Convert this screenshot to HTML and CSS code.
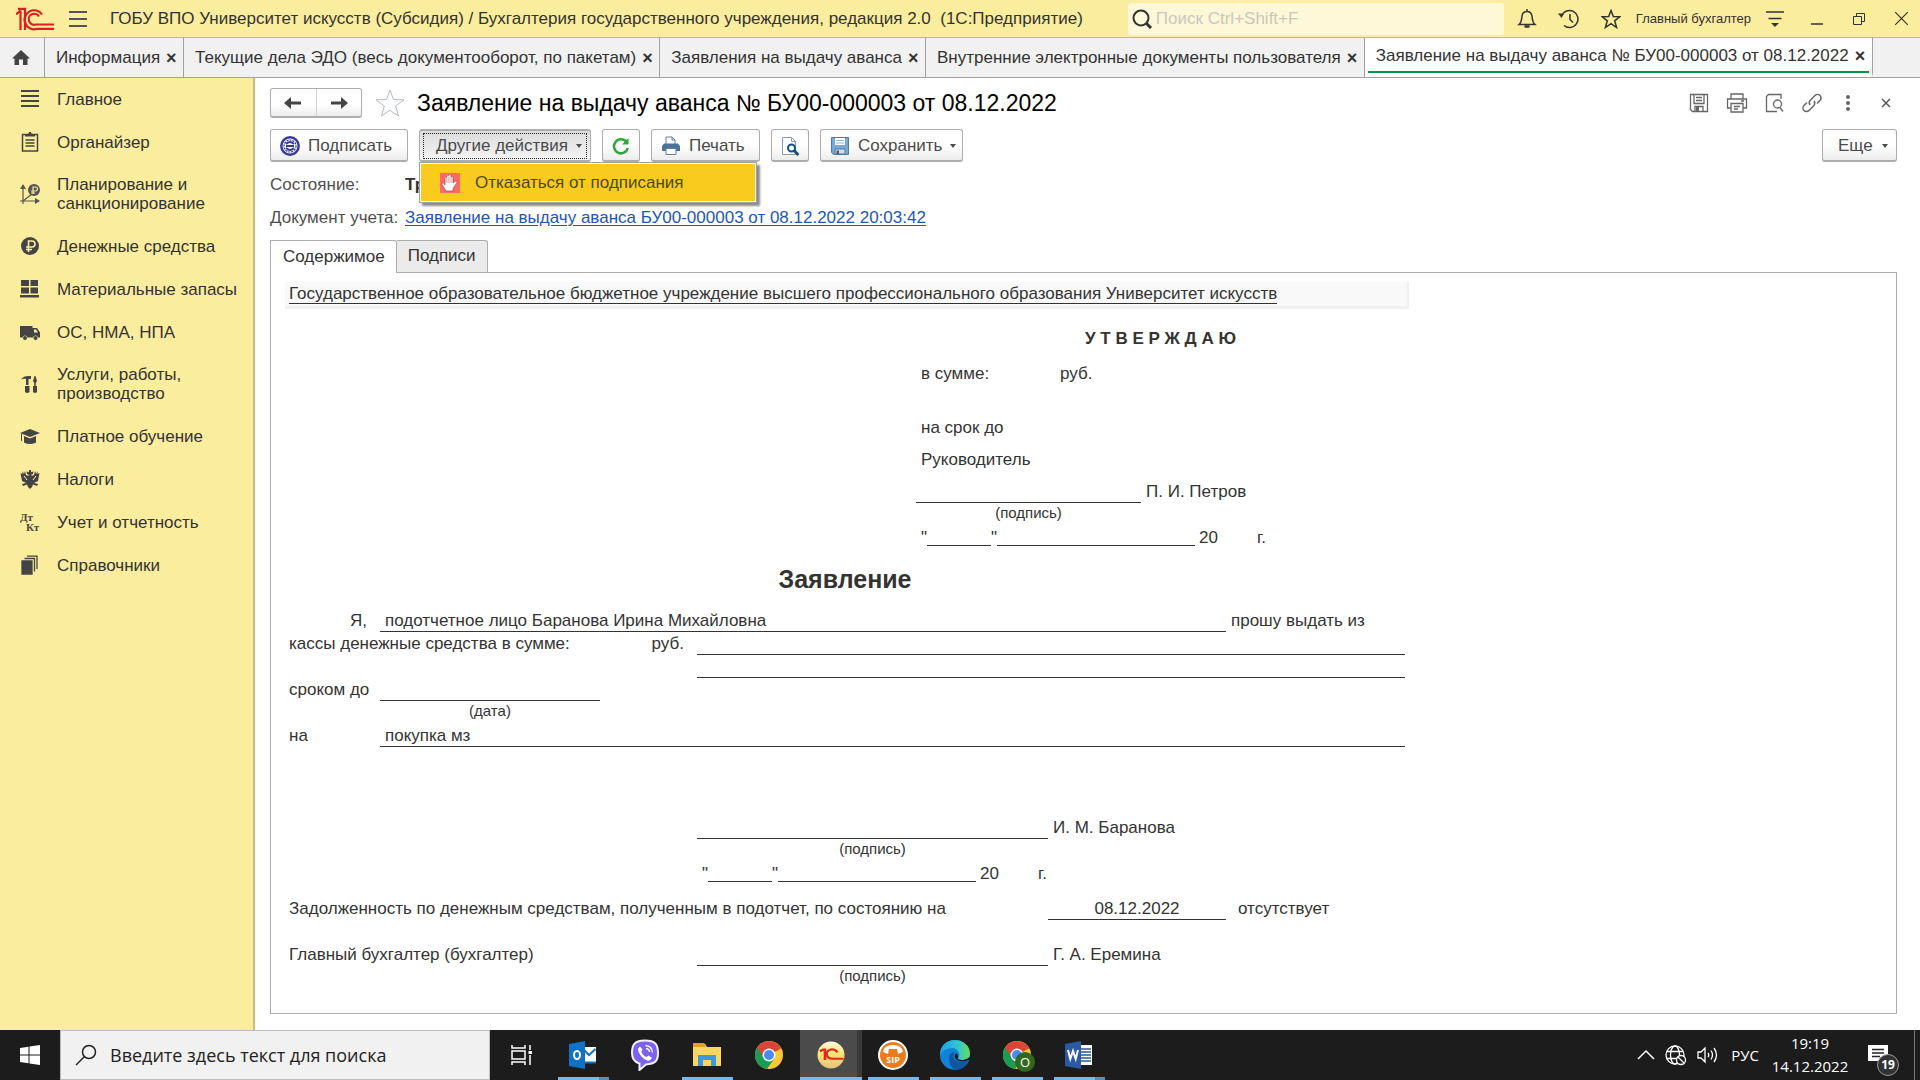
FILE: index.html
```html
<!DOCTYPE html>
<html lang="ru">

<head>
    <meta charset="utf-8">
    <title>Заявление на выдачу аванса № БУ00-000003 от 08.12.2022</title>

    <link rel="stylesheet" href="styles.css">
</head>

<body>

    <!-- Shared icons -->
    <svg class="defs" aria-hidden="true">
        <symbol id="logo-1c" viewBox="0 0 38 24">
            <g fill="none" stroke="currentColor" stroke-width="2.2">
                <path d="M0 7.500L4.500 3.500M4.500 3.500V23M2 1.800H9V23" />
                <path d="M26 7.500A9.500 9.500 0 1 0 21 21.800H38" />
                <path d="M23 9.500A5.500 5.500 0 1 0 20 17.500H38" />
            </g>
        </symbol>
        <symbol id="chrome" viewBox="0 0 28 28">
            <circle cx="14" cy="14" r="14" fill="#fcc934" />
            <path d="M14 14L1.900 7A14 14 0 0 1 26.100 7Z" fill="#dc4437" />
            <path d="M14 14L1.900 7A14 14 0 0 0 12 27.850L19.500 17.500Z" fill="#1a9c57" />
            <path d="M8.500 16.500L1.900 7 14 7H26.500L14 14Z" fill="#dc4437" />
            <path d="M1.900 7A14 14 0 0 0 12 27.850L18 18 10 18Z" fill="#1a9c57" />
            <circle cx="14" cy="14" r="6.500" fill="#fff" />
            <circle cx="14" cy="14" r="5" fill="#4a8af4" />
        </symbol>
    </svg>

    <header class="topbar">
        <svg class="logo" width="38" height="24">
            <use href="#logo-1c" />
        </svg>
        <button class="icon-button burger" aria-label="Меню">
            <svg width="18" height="16" stroke="#555" stroke-width="2">
                <path d="M0 1H18M0 8H18M0 15H18" />
            </svg>
        </button>
        <div class="app-title">ГОБУ ВПО Университет искусств (Субсидия) / Бухгалтерия государственного учреждения, редакция 2.0&nbsp; (1С:Предприятие)</div>
        <label class="search">
            <svg width="22" height="20" fill="none" stroke="#333">
                <circle cx="9" cy="9" r="7.500" stroke-width="2" />
                <path d="M14 14L19 19" stroke-width="3" />
            </svg>
            <input type="text" placeholder="Поиск Ctrl+Shift+F" aria-label="Поиск">
        </label>
        <div class="top-actions">
            <button class="icon-button" aria-label="Уведомления">
                <svg width="20" height="20" fill="none" stroke="#333" stroke-width="1.500">
                    <path d="M2 15.500C5 13 4.500 10 5 7 5.500 4 7.500 2.500 10 2.500S14.500 4 15 7C15.500 10 15 13 18 15.500Z M10 0V2.500" />
                    <path d="M7.500 17.500H12.500" stroke-width="2.500" />
                </svg>
            </button>
            <button class="icon-button" aria-label="История">
                <svg width="22" height="20" fill="none" stroke="#333" stroke-width="1.500">
                    <path d="M3.500 7A8.500 8.500 0 1 1 6 16.500M12 5V10.500L15 13.500" />
                    <path d="M0 4.500H6L3.500 9Z" fill="#333" stroke="none" />
                </svg>
            </button>
            <button class="icon-button" aria-label="Избранное">
                <svg width="20" height="20" fill="none" stroke="#333" stroke-width="1.500">
                    <path d="M10 1.500L12.300 7.500 19 7.700 13.700 11.800 15.600 18.500 10 14.700 4.400 18.500 6.300 11.800 1 7.700 7.700 7.500Z" />
                </svg>
            </button>
            <span class="user">Главный бухгалтер</span>
            <button class="icon-button" aria-label="Настройки">
                <svg width="18" height="18" stroke="#333" stroke-width="1.500">
                    <path d="M0 2H18M2.500 8.500H15.500" />
                    <path d="M5 13H13L9 17Z" fill="#333" stroke="none" />
                </svg>
            </button>
        </div>
        <div class="window-buttons">
            <button class="icon-button" aria-label="Свернуть">
                <svg width="12" height="12" stroke="#333" stroke-width="1.500">
                    <path d="M0 11H12" />
                </svg>
            </button>
            <button class="icon-button" aria-label="Развернуть">
                <svg width="12" height="12" fill="none" stroke="#333">
                    <path d="M.5 3.500H8.500V11.500H.5ZM3.500 3.500V.5H11.500V8.500H8.500" />
                </svg>
            </button>
            <button class="icon-button" aria-label="Закрыть">
                <svg width="13" height="13" stroke="#333" stroke-width="1.200">
                    <path d="M0 0L13 13M13 0L0 13" />
                </svg>
            </button>
        </div>
    </header>

    <nav class="open-tabs">
        <button class="open-tab home" aria-label="Начальная страница">
            <svg width="18" height="16" fill="#444">
                <path d="M9 0L18 8.500H15.500V15H11V9.500H7V15H2.500V8.500H0Z" />
            </svg>
        </button>
        <button class="open-tab">Информация <span class="cross">×</span></button>
        <button class="open-tab">Текущие дела ЭДО (весь документооборот, по пакетам) <span class="cross">×</span></button>
        <button class="open-tab">Заявления на выдачу аванса <span class="cross">×</span></button>
        <button class="open-tab">Внутренние электронные документы пользователя <span class="cross">×</span></button>
        <button class="open-tab active">Заявление на выдачу аванса № БУ00-000003 от 08.12.2022 <span class="cross">×</span></button>
    </nav>

    <div class="workspace">
        <nav class="sections">
            <a href="#">
                <svg viewBox="0 0 20 20" stroke="#444" stroke-width="2">
                    <path d="M1 2H19M1 7H19M1 12H19M1 17H19" />
                </svg>
                Главное
            </a>
            <a href="#">
                <svg viewBox="0 0 20 20" fill="none" stroke="#444" stroke-width="1.500">
                    <path d="M2.500 2.500H17.500V19H2.500ZM5.500 8H14.500M5.500 11H14.500M5.500 14H14.500" />
                    <path d="M5 4.500V3H8L9 0H11L12 3H15V4.500Z" fill="#444" stroke="none" />
                </svg>
                Органайзер
            </a>
            <a href="#">
                <svg viewBox="0 0 20 20" fill="none" stroke="#555" stroke-width="1.200">
                    <path d="M3 20V3M0 17H17M3 17L12 10" />
                    <path d="M0 5L3 0 6 5ZM15 14L20 17 15 20Z" fill="#555" stroke="none" />
                    <circle cx="14" cy="6" r="6" fill="#555" stroke="none" />
                    <path d="M13 10V3H15.500A2 2 0 0 1 15.500 7H11M11 9H15" stroke="#fbed9e" />
                </svg>
                Планирование и санкционирование
            </a>
            <a href="#">
                <svg viewBox="0 0 20 20" fill="none">
                    <circle cx="10" cy="10" r="9" fill="#444" />
                    <path d="M8.500 16V5H12A3 3 0 0 1 12 11H6M6 13.500H12" stroke="#fbed9e" stroke-width="1.600" />
                </svg>
                Денежные средства
            </a>
            <a href="#">
                <svg viewBox="0 0 20 20" fill="#444">
                    <path d="M1 1H9V7H1ZM10.500 1H18V7H10.500ZM1 8.500H9V14.500H1ZM10.500 8.500H18V14.500H10.500ZM0 16H19V18.500H0Z" />
                </svg>
                Материальные запасы
            </a>
            <a href="#">
                <svg viewBox="0 0 20 20" fill="#444">
                    <path fill-rule="evenodd" d="M0 4H12.500V6H17L20 10.500V15.500H18A2.600 2.600 0 0 0 13 15.500H7.500A2.600 2.600 0 0 0 2.500 15.500H0ZM14 7.500V10.500H18L16 7.500Z" />
                    <circle cx="5" cy="16" r="2" />
                    <circle cx="15.500" cy="16" r="2" />
                </svg>
                ОС, НМА, НПА
            </a>
            <a href="#">
                <svg viewBox="0 0 20 20" fill="#444">
                    <path d="M1 5.500C3 2.500 6 1.500 11 2V5H8.500V11H6V5C4 4.500 3 5 1 5.500ZM5 12H9.500V18Q7 20 5 18ZM14.500 2H15.500L17 7 15.800 9V12H17V18Q15 20 13 18V12H14.200V9L13 7Z" />
                </svg>
                Услуги, работы, производство
            </a>
            <a href="#">
                <svg viewBox="0 0 20 20" fill="#444">
                    <path d="M10 3L20 7 10 11 0 7ZM4 10L10 12.500 16 10V16.500Q10 19.500 4 16.500ZM1 8H2V15H1Z" />
                </svg>
                Платное обучение
            </a>
            <a href="#">
                <svg viewBox="0 0 20 20" fill="#444">
                    <path d="M9 3V1H11V3L13.500 2.500 13 5 11.500 5.500V7L14 6 15 2 16 5 17.500 2 17.500 5 19.500 4 18 12 14 14 18 15 17 17 13 15.500 12 18 10 20 8 18 7 15.500 3 17 2 15 6 14 2 12 .5 4 2.500 5 2.500 2 4 5 5 2 6 6 8.500 7V5.500L7 5 6.500 2.500Z" />
                    <path d="M4 7L7 11M16 7L13 11" stroke="#fbed9e" />
                </svg>
                Налоги
            </a>
            <a href="#">
                <svg viewBox="0 0 20 20" fill="#444" class="dtkt">
                    <text x="0" y="9">Дт</text>
                    <text x="6" y="19">Кт</text>
                </svg>
                Учет и отчетность
            </a>
            <a href="#">
                <svg viewBox="0 0 20 20" fill="none" stroke="#444" stroke-width="1.300">
                    <path d="M2 6H12V19H2Z" fill="#444" />
                    <path d="M4.500 3.500H14.500V16.500M7 1.200H17V14" />
                </svg>
                Справочники
            </a>
        </nav>

        <main class="form">
            <div class="form-header">
                <div class="history">
                    <button aria-label="Назад">
                        <svg width="18" height="12" fill="#444">
                            <path d="M7 0V4.500H17V7.500H7V12L0 6Z" />
                        </svg>
                    </button>
                    <button aria-label="Вперед">
                        <svg width="18" height="12" fill="#444">
                            <path d="M11 0V4.500H1V7.500H11V12L18 6Z" />
                        </svg>
                    </button>
                </div>
                <button class="icon-button favorite" aria-label="В избранное">
                    <svg width="30" height="28" fill="none" stroke="#b4bac0">
                        <path d="M15 1L18.500 10.500 29 10.800 20.700 17 23.500 27 15 21.300 6.500 27 9.300 17 1 10.800 11.500 10.500Z" />
                    </svg>
                </button>
                <h1>Заявление на выдачу аванса № БУ00-000003 от 08.12.2022</h1>
                <div class="form-tools">
                    <button class="icon-button" aria-label="Сохранить">
                        <svg width="20" height="20" fill="none" stroke="#666" stroke-width="1.300">
                            <path d="M1.500 1.500H18.500V18.500H3.500L1.500 16.500ZM5 1.500V10.500H15V1.500M7 4.500H13M7 7.500H13M6 18.500V13.500H14V18.500" />
                            <path d="M7 14H10V18H7Z" fill="#666" stroke="none" />
                        </svg>
                    </button>
                    <button class="icon-button" aria-label="Печать">
                        <svg width="22" height="20" fill="none" stroke="#666" stroke-width="1.300">
                            <path d="M5 6V1H17V6M5 15H1.500V6H20.500V15H17M5 10.500H17V19H5ZM8 13.500H14M8 16H12M15 8H18" />
                        </svg>
                    </button>
                    <button class="icon-button" aria-label="Просмотр">
                        <svg width="20" height="20" fill="none" stroke="#666" stroke-width="1.300">
                            <path d="M16 6V1.500H3.500L1.500 3.500V18.500H12M15 14.500L18 18.500" />
                            <circle cx="12.500" cy="11" r="4" />
                        </svg>
                    </button>
                    <button class="icon-button" aria-label="Ссылка">
                        <svg width="20" height="20" fill="none" stroke="#666" stroke-width="1.500">
                            <path d="M8 12A4 4 0 0 1 8.500 7L13 2.500A3.500 3.500 0 0 1 18 7.500L15 10.500M12 8A4 4 0 0 1 11.500 13L7 17.500A3.500 3.500 0 0 1 2 12.500L5 9.500" />
                        </svg>
                    </button>
                    <button class="icon-button" aria-label="Еще">
                        <svg width="20" height="20" fill="#666">
                            <circle cx="9" cy="4" r="2" />
                            <circle cx="9" cy="10" r="2" />
                            <circle cx="9" cy="16" r="2" />
                        </svg>
                    </button>
                    <button class="icon-button" aria-label="Закрыть">
                        <svg width="20" height="20" stroke="#555" stroke-width="1.500">
                            <path d="M6 6L14 14M14 6L6 14" />
                        </svg>
                    </button>
                </div>
            </div>

            <div class="commands">
                <button class="command sign">
                    <svg width="20" height="20" fill="none" stroke="#3a3a9c">
                        <circle cx="10" cy="10" r="8.700" stroke-width="2.500" />
                        <circle cx="10" cy="10" r="6" stroke-width="1.200" stroke-dasharray="2 1" />
                        <path d="M6 8Q10 4 14 8M6 12Q10 16 14 12M6 10H14" stroke-width="1.800" />
                    </svg>
                    Подписать
                </button>
                <div class="dropdown">
                    <button class="command pressed"><span class="focus">Другие действия <i class="arrow"></i></span></button>
                    <div class="dropdown-menu">
                        <button class="dropdown-item">
                            <svg width="20" height="20">
                                <path d="M0 0H20V20H0Z" fill="#fb6a66" />
                                <path d="M6 18L2 11.500Q1.500 9.500 3 9.500L5 12V4.500Q5.800 3 6.800 4.500V3Q7.800 1 8.800 2.500V2Q10 .5 11 2V4Q12 2.500 13 4V10L15.500 8Q17.500 8 17 9.500L13 15.500V18Z" fill="#fff" stroke="#a33" stroke-width=".6" />
                                <path d="M6.900 5V10M8.900 4V10M11 4V10" stroke="#c66" stroke-width=".7" />
                            </svg>
                            Отказаться от подписания
                        </button>
                    </div>
                </div>
                <button class="command square" aria-label="Обновить">
                    <svg width="18" height="18" fill="none" stroke="#2fa53a" stroke-width="2.500">
                        <path d="M14.500 5A7 7 0 1 0 15.800 11" />
                        <path d="M16.500 1V7.500H10Z" fill="#2fa53a" stroke="none" />
                    </svg>
                </button>
                <button class="command print">
                    <svg width="20" height="20" fill="none">
                        <path d="M5 9V1H11L14 4V9" fill="#fff" stroke="#5c7f9f" />
                        <path d="M11 1V4H14" stroke="#5c7f9f" />
                        <path d="M3 7.500H17L19 10V15H1V10Z" fill="#4a739c" />
                        <path d="M5 12.500H15V18.500H5Z" fill="#fff" stroke="#5c7f9f" />
                    </svg>
                    Печать
                </button>
                <button class="command square" aria-label="Предварительный просмотр">
                    <svg width="18" height="20" fill="none">
                        <path d="M1.500 1.500H10.500L14.500 5.500V18.500H1.500Z" fill="#fff" stroke="#8a9aa8" />
                        <path d="M10.500 1.500V5.500H14.500" stroke="#8a9aa8" />
                        <circle cx="10.500" cy="12" r="3.500" stroke="#0f5080" stroke-width="2" />
                        <path d="M13 14.500L17.500 19" stroke="#0f5080" stroke-width="3" />
                    </svg>
                </button>
                <button class="command save">
                    <svg width="20" height="20" fill="none">
                        <path d="M1.500 1.500H18.500V18.500H3.500L1.500 16.500Z" fill="#78a8d8" stroke="#4c79a8" />
                        <path d="M5 2H15V9H5Z" fill="#fff" />
                        <path d="M6 4.500H14M6 7H14" stroke="#8fb4d8" />
                        <path d="M5 13H15V18H5Z" fill="#d5dce4" stroke="#4c79a8" />
                        <path d="M6.500 14.500H9V18H6.500Z" fill="#557" />
                    </svg>
                    Сохранить <i class="arrow"></i>
                </button>
                <button class="command more">Еще <i class="arrow"></i></button>
            </div>

            <div class="field">
                <span class="field-name">Состояние:</span>
                <b class="state">Тр</b>
            </div>
            <div class="field">
                <span class="field-name">Документ учета:</span>
                <a href="#">Заявление на выдачу аванса БУ00-000003 от 08.12.2022 20:03:42</a>
            </div>

            <div class="pages">
                <button class="page-tab current">Содержимое</button>
                <button class="page-tab">Подписи</button>
            </div>

            <section class="sheet">
                <div class="org"><span>Государственное образовательное бюджетное учреждение высшего профессионального образования Университет искусств</span></div>

                <div class="row h-41">
                    <b class="approve center">У Т В Е Р Ж Д А Ю</b>
                </div>
                <div class="row h-35">
                    <span class="col-e">в сумме:</span>
                    <span class="col-f indent">руб.</span>
                </div>
                <div class="row h-54">
                    <span class="col-e">на срок до</span>
                </div>
                <div class="row h-32">
                    <span class="col-e">Руководитель</span>
                </div>
                <div class="row h-32">
                    <span class="line approve-sign"></span>
                    <span class="col-g">П. И. Петров</span>
                </div>
                <div class="row note">
                    <span class="approve-sign center">(подпись)</span>
                </div>
                <div class="row date">
                    <span class="approve date-parts"><span>"</span><i class="day"></i><span>"</span><i class="month"></i><span class="year">20</span><span>г.</span></span>
                </div>

                <h2>Заявление</h2>

                <div class="row h-35">
                    <span class="col-a me">Я,</span>
                    <span class="line person">подотчетное лицо Баранова Ирина Михайловна</span>
                    <span class="col-i">прошу выдать из</span>
                </div>
                <div class="row">
                    <span class="col-a">кассы денежные средства в сумме:</span>
                    <span class="col-c right">руб.</span>
                    <span class="line amount"></span>
                </div>
                <div class="row">
                    <span class="line amount"></span>
                </div>
                <div class="row">
                    <span class="col-a">сроком до</span>
                    <span class="line col-b"></span>
                </div>
                <div class="row note">
                    <span class="col-b center">(дата)</span>
                </div>
                <div class="row date">
                    <span class="col-a">на</span>
                    <span class="line purpose">покупка мз</span>
                </div>

                <div class="row h-92">
                    <span class="line sign-place"></span>
                    <span class="col-f">И. М. Баранова</span>
                </div>
                <div class="row note">
                    <span class="sign-place center">(подпись)</span>
                </div>
                <div class="row date">
                    <span class="amount date-parts"><span>"</span><i class="day"></i><span>"</span><i class="month"></i><span class="year">20</span><span>г.</span></span>
                </div>
                <div class="row h-35">
                    <span class="col-a">Задолженность по денежным средствам, полученным в подотчет, по состоянию на</span>
                    <span class="line debt-date center">08.12.2022</span>
                    <span class="col-i indent">отсутствует</span>
                </div>
                <div class="row h-46">
                    <span class="col-a">Главный бухгалтер (бухгалтер)</span>
                    <span class="line sign-place"></span>
                    <span class="col-f">Г. А. Еремина</span>
                </div>
                <div class="row note">
                    <span class="sign-place center">(подпись)</span>
                </div>
            </section>
        </main>
    </div>

    <footer class="taskbar">
        <button class="start" aria-label="Пуск">
            <svg width="20" height="20" fill="#fff">
                <path d="M0 3L8.500 1.800V9.500H0ZM9.500 1.600L20 0V9.500H9.500ZM0 10.500H8.500V18.200L0 17ZM9.500 10.500H20V20L9.500 18.400Z" />
            </svg>
        </button>
        <label class="task-search">
            <svg width="22" height="22" fill="none" stroke="#222" stroke-width="1.500">
                <circle cx="14" cy="8" r="6.500" />
                <path d="M9.500 12.500L1 21" />
            </svg>
            <input type="text" placeholder="Введите здесь текст для поиска" aria-label="Поиск в Windows">
        </label>
        <button class="task" aria-label="Представление задач">
            <svg width="22" height="20" fill="none" stroke="#fff" stroke-width="1.500">
                <path d="M1 0V3H14V0M1 6H14V14H1ZM1 20V17H14V20M19 0V5M19 10V20" />
                <path d="M17.500 6H21V9H17.500Z" fill="#fff" stroke="none" />
            </svg>
        </button>
        <button class="task running grouped" aria-label="Outlook">
            <svg width="28" height="28">
                <path d="M13 6H27V22H13Z" fill="#fff" />
                <path d="M14 8L20 14 26.500 8M13 21.500H27" fill="none" stroke="#1372c4" stroke-width="2" />
                <path d="M0 3L16 0V28L0 25Z" fill="#0f72c6" />
                <ellipse cx="8" cy="14" rx="3" ry="4" fill="none" stroke="#fff" stroke-width="2" />
            </svg>
        </button>
        <button class="task" aria-label="Viber">
            <svg width="30" height="32" fill="none">
                <path d="M15 1.500C25 1.500 28 5 28 14 28 22 25 25 16 25.500L9.500 31V24.500C4 23 2 20 2 14 2 5 5 1.500 15 1.500Z" fill="#7a63ee" stroke="#f4f0ff" stroke-width="2" />
                <path d="M10 7.500L12.500 10.500 11.500 13Q13 17 16.500 18L18.500 16.500 22 19Q20 22.500 17 21.500 10 18.500 8 11 7.500 9 10 7.500Z" fill="#fff" />
                <path d="M15.500 6.500Q22 7 22.500 13.500M16 9.500Q19.500 10 19.500 13" stroke="#fff" stroke-width="1.300" />
            </svg>
        </button>
        <button class="task running" aria-label="Проводник">
            <svg width="28" height="26">
                <path d="M0 2H12L14 5H28V24H0Z" fill="#fdd466" />
                <path d="M0 1H11L13 3 12 5H0Z" fill="#e0a21c" />
                <path d="M5 24V13H23V24H18V18H10V24Z" fill="#3b9ade" />
            </svg>
        </button>
        <button class="task" aria-label="Chrome">
            <svg width="28" height="28">
                <use href="#chrome" />
            </svg>
        </button>
        <button class="task running grouped selected" aria-label="1С:Предприятие">
            <svg width="28" height="28">
                <linearGradient id="gold" x2="0" y2="1">
                    <stop offset="0" stop-color="#fffbe0" />
                    <stop offset=".45" stop-color="#fbe573" />
                    <stop offset="1" stop-color="#e5c27e" />
                </linearGradient>
                <circle cx="14" cy="14" r="13.500" fill="url(#gold)" />
                <g transform="translate(3 7) scale(.62 .55)" fill="none" stroke="#e02a1d" stroke-width="4">
                    <path d="M0 6L5 3H8V22" />
                    <path d="M28 8A9 8.500 0 1 0 20 19.500H38" />
                </g>
            </svg>
        </button>
        <button class="task running" aria-label="SIP">
            <svg width="30" height="30">
                <circle cx="15" cy="15" r="14" fill="#ec7b1e" stroke="#fff" stroke-width="2" />
                <path d="M5 12Q6 5 15 5T25 12L20 14 19 9H11L10 14Z" fill="#fff" />
                <text class="sip" x="15" y="23">SIP</text>
            </svg>
        </button>
        <button class="task running" aria-label="Edge">
            <svg width="30" height="30">
                <linearGradient id="sea">
                    <stop offset="0" stop-color="#1da2e8" />
                    <stop offset=".6" stop-color="#31c5cf" />
                    <stop offset="1" stop-color="#63de56" />
                </linearGradient>
                <circle cx="15" cy="15" r="15" fill="#1183d6" />
                <path d="M0 13C1 5 7 0 15 0S30 6 30 13 24 21 18 19C21 16 19 8 12 8 6 8 1 12 0 15Z" fill="url(#sea)" />
                <path d="M9 18C9 14 12 12 15 12 12 15 13 21 20 22 24 22.500 27 21 28.500 20 26 27 20 30 15 30 11 28 9 23 9 18Z" fill="#0f56a3" />
                <path d="M15 14Q18 12 18 17L17.500 19Q24 22 30 17V21L28.500 20Q22 23 17 20 14 18 15 14Z" fill="#1c1c1c" />
            </svg>
        </button>
        <button class="task running" aria-label="Chrome, профиль O">
            <svg width="28" height="28">
                <use href="#chrome" />
            </svg>
            <span class="profile">O</span>
        </button>
        <button class="task running grouped" aria-label="Word">
            <svg width="28" height="28">
                <path d="M14 4H27V24H14Z" fill="#fff" />
                <path d="M16 8H26M16 11H26M16 14H26M16 17H26M16 20H26" stroke="#2b579a" stroke-width="1.500" />
                <path d="M0 3L16 0V28L0 25Z" fill="#2b5aa5" />
                <path d="M3 9L5.300 18 8 10 10.700 18 13 9" fill="none" stroke="#fff" stroke-width="2" />
            </svg>
        </button>

        <div class="tray">
            <svg width="18" height="10" fill="none" stroke="#fff" stroke-width="1.500">
                <path d="M1 9L9 1 17 9" />
            </svg>
            <svg width="22" height="22" fill="none" stroke="#fff" stroke-width="1.300">
                <circle cx="10" cy="11" r="9" />
                <ellipse cx="10" cy="11" rx="4.500" ry="9" />
                <path d="M2 7.500H18M2 14.500H13" />
                <circle cx="16" cy="16" r="4.500" fill="#1c1c1c" />
                <path d="M13 13L19 19" />
            </svg>
            <svg width="22" height="18" fill="none" stroke="#fff" stroke-width="1.300">
                <path d="M1 6H4L8 2V16L4 12H1ZM11 7Q12.500 9 11 11M14 4.500Q17 9 14 13.500M17 2Q22 9 17 16" />
            </svg>
            <span class="lang">РУС</span>
            <time class="clock">19:19<br>14.12.2022</time>
            <div class="notices">
                <svg width="20" height="20">
                    <path d="M0 0H20V16H14L10 20V16H0Z" fill="#fff" />
                    <path d="M4 4.500H16M4 8H16M4 11.500H12" stroke="#222" stroke-width="1.300" />
                </svg>
                <span class="badge">19</span>
            </div>
            <div class="show-desktop"></div>
        </div>
    </footer>

</body>

</html>
```
FILE: styles.css
```css
* {
    box-sizing: border-box;
}

body {
    display: flex;
    flex-direction: column;
    height: 100vh;
    margin: 0;
    overflow: hidden;
    font-family: "Liberation Sans", Arial, sans-serif;
    font-size: 17px;
    line-height: 20px;
    color: #333;
    background: #fff;
}

button,
input {
    margin: 0;
    padding: 0;
    border: none;
    background: none;
    font: inherit;
    color: inherit;
}

svg {
    display: block;
    flex: none;
}

.defs {
    position: absolute;
    width: 0;
    height: 0;
}

.icon-button {
    display: flex;
    align-items: center;
    justify-content: center;
}

/* Top bar */

.topbar {
    display: flex;
    align-items: center;
    flex: none;
    height: 38px;
    padding: 0 12px 0 16px;
    border-bottom: 1px solid #c8b968;
    background: #fbed9e;
}

.logo {
    color: #d9201f;
}

.burger {
    margin-left: 15px;
}

.app-title {
    flex: 1;
    margin-left: 23px;
    white-space: nowrap;
}

.search {
    display: flex;
    align-items: center;
    width: 376px;
    height: 32px;
    padding-left: 4px;
    gap: 2px;
    border-radius: 3px;
    background: #fef7d8;
}

.search input {
    flex: 1;
    outline: none;
}

.search input::placeholder {
    color: #c8c8c0;
}

.top-actions {
    display: flex;
    align-items: center;
    gap: 21px;
    margin-left: 13px;
}

.user {
    margin: 0 -6px;
    font-size: 13px;
}

.window-buttons {
    display: flex;
    align-items: center;
    gap: 30px;
    margin-left: 27px;
}

/* Open windows */

.open-tabs {
    display: flex;
    flex: none;
    height: 40px;
    border-bottom: 1px solid #a0a0a0;
    background: #f1f1f1;
}

.open-tab {
    display: flex;
    align-items: center;
    gap: 6px;
    padding: 0 7px 0 11px;
    border-right: 1px solid #a0a0a0;
    white-space: nowrap;
}

.open-tab.home {
    padding: 0 14px 0 12px;
}

.open-tab.active {
    border-bottom: 4px solid #fff;
    background: linear-gradient(#009646, #009646) center bottom / calc(100% - 6px) 2px no-repeat #fff;
}

.cross {
    width: 10px;
    font-size: 18px;
    font-weight: bold;
}

/* Sections panel */

.workspace {
    display: flex;
    flex: 1;
    min-height: 0;
}

.sections {
    flex: none;
    width: 255px;
    border-right: 2px solid #c9bd7e;
    background: #fbed9e;
}

.sections a {
    display: flex;
    align-items: center;
    gap: 17px;
    min-height: 43px;
    padding: 11px 12px 12px 20px;
    line-height: 19px;
    color: inherit;
    text-decoration: none;
}

.sections svg {
    width: 20px;
    height: 20px;
}

.dtkt {
    font-family: "Liberation Serif", serif;
    font-size: 11px;
    font-weight: bold;
}

/* Form */

.form {
    display: flex;
    flex-direction: column;
    flex: 1;
    min-width: 0;
    padding: 10px 23px 16px 15px;
}

.form-header {
    display: flex;
    align-items: center;
    height: 30px;
}

.history {
    display: flex;
    width: 92px;
    height: 30px;
    border: 1px solid #adadad;
    border-bottom-width: 2px;
    border-radius: 3px;
    background: linear-gradient(#fff 60%, #ededed);
}

.history button {
    display: flex;
    flex: 1;
    align-items: center;
    justify-content: center;
}

.history button + button {
    border-left: 1px solid #d0d0d0;
}

.favorite {
    margin: 0 12px 0 13px;
}

h1 {
    flex: 1;
    margin: 0;
    font-size: 23px;
    line-height: 30px;
    font-weight: normal;
    color: #000;
}

.form-tools {
    display: flex;
    gap: 17px;
    padding-right: 1px;
}

.commands {
    display: flex;
    gap: 11px;
    margin-top: 11px;
}

.command {
    display: flex;
    align-items: center;
    height: 33px;
    padding: 1px 9px 0;
    border: 1px solid #adadad;
    border-bottom-width: 2px;
    border-radius: 3px;
    background: linear-gradient(#fff 50%, #ececec);
    color: #4a4a4a;
    white-space: nowrap;
}

.sign {
    width: 138px;
    gap: 8px;
}

.print {
    width: 109px;
    gap: 8px;
}

.save {
    width: 143px;
    gap: 8px;
    padding-right: 7px;
}

.square {
    justify-content: center;
    width: 38px;
}

.more {
    width: 75px;
    gap: 9px;
    margin-left: auto;
    padding-left: 15px;
}

.arrow {
    width: 0;
    border: 3px solid transparent;
    border-top: 4px solid #4a4a4a;
    border-bottom: none;
}

.dropdown {
    position: relative;
}

.pressed {
    width: 172px;
    padding: 3px;
    border-top-width: 2px;
    background: linear-gradient(#dcdcdc, #f4f4f4);
}

.focus {
    display: flex;
    flex: 1;
    align-items: center;
    justify-content: space-between;
    height: 26px;
    padding: 0 4px 0 12px;
    border: 1px dotted #222;
}

.dropdown-menu {
    position: absolute;
    left: 0;
    top: 33px;
    z-index: 10;
    width: 338px;
    padding: 1px;
    border: 1px solid #a0a0a0;
    background: #fff;
    box-shadow: 3px 3px 2px rgba(0, 0, 0, 0.45);
}

.dropdown-item {
    display: flex;
    align-items: center;
    gap: 15px;
    width: 100%;
    height: 37px;
    padding-left: 19px;
    background: #facb1f;
    color: #4a4a20;
}

.field {
    display: flex;
    height: 33px;
    align-items: center;
}

.commands + .field {
    margin-top: 6px;
}

.field-name {
    width: 135px;
    color: #4f4f4f;
}

.state {
    width: 14px;
    overflow: hidden;
}

.field a {
    color: #1d56b4;
    text-underline-offset: 2px;
}

.pages {
    display: flex;
    margin-top: 6px;
}

.page-tab {
    height: 32px;
    padding: 0 11px 1px;
    border: 1px solid #adadad;
    border-bottom: none;
    border-left: none;
    border-radius: 0 3px 0 0;
    background: #ebebeb;
}

.page-tab.current {
    z-index: 1;
    height: 33px;
    margin-bottom: -1px;
    padding-left: 12px;
    border-left: 1px solid #adadad;
    background: #fff;
}

/* Printed sheet */

.sheet {
    flex: 1;
    padding: 9px 14px;
    border: 1px solid #adadad;
}

.org {
    max-width: 1124px;
    height: 27px;
    padding-left: 4px;
    border: solid #f0f0f0;
    border-width: 0 2px 3px 0;
    background: #f9f9f9;
    line-height: 24px;
}

.org span {
    border-bottom: 1px solid #333;
}

/* a  b  c  d  e  f  g  h  i */
.row {
    display: grid;
    grid-template-columns: 95px 220px 97px 219px 132px 93px 53px 32px 179px;
    align-items: end;
    height: 23px;
    white-space: nowrap;
}

.row > * {
    grid-row: 1;
    min-width: 0;
    height: 21px;
    padding: 0 5px;
}

.h-32 {
    height: 32px;
}

.h-35 {
    height: 35px;
}

.h-41 {
    height: 41px;
}

.h-46 {
    height: 46px;
}

.h-54 {
    height: 54px;
}

.h-92 {
    height: 92px;
}

.row.note {
    height: 20px;
    font-size: 15px;
}

.row.date {
    height: 26px;
}

.line {
    border-bottom: 1px solid #333;
}

.center {
    text-align: center;
}

.row > .right {
    padding-right: 13px;
    text-align: right;
}

.row > .col-a {
    grid-column: 1;
    padding-left: 4px;
}

.col-b {
    grid-column: 2;
}

.col-c {
    grid-column: 3;
}

.col-e {
    grid-column: 5;
}

.col-f {
    grid-column: 6;
}

.col-g {
    grid-column: 7;
}

.col-i {
    grid-column: 9;
}

.row > .me {
    padding-right: 13px;
    text-align: right;
}

.row > .indent {
    padding-left: 12px;
}

.approve {
    grid-column: 5 / 10;
}

.approve-sign {
    grid-column: 5 / 7;
}

.person {
    grid-column: 2 / 9;
}

.amount {
    grid-column: 4 / 10;
}

.purpose {
    grid-column: 2 / 10;
}

.sign-place {
    grid-column: 4 / 6;
}

.debt-date {
    grid-column: 6 / 9;
}

.date-parts {
    display: flex;
}

.day,
.month {
    width: 64px;
    height: 18px;
    border-bottom: 1px solid #333;
}

.month {
    width: 198px;
}

.year {
    width: 62px;
    padding-left: 4px;
}

h2 {
    max-width: 1120px;
    height: 48px;
    margin: 0;
    padding-top: 15px;
    font-size: 25px;
    line-height: 30px;
    text-align: center;
}

/* Taskbar */

.taskbar {
    display: flex;
    flex: none;
    height: 50px;
    background: #1c1c1c;
    font-family: "Open Sans", "Noto Sans", sans-serif;
    color: #fff;
}

.start {
    display: flex;
    align-items: center;
    justify-content: center;
    width: 60px;
}

.task-search {
    display: flex;
    align-items: center;
    gap: 13px;
    width: 430px;
    margin-right: 1px;
    padding-left: 14px;
    border: 1px solid #bdbdbd;
    background: #f1f1f1;
    color: #222;
}

.task-search input {
    flex: 1;
    outline: none;
    font-size: 18px;
}

.task-search input::placeholder {
    color: #222;
}

.task {
    position: relative;
    display: flex;
    align-items: center;
    justify-content: center;
    width: 62px;
}

.task:nth-of-type(2) {
    width: 61px;
}

.running::after {
    content: "";
    position: absolute;
    left: 6px;
    right: 5px;
    bottom: 0;
    height: 3px;
    background: #76b9ed;
}

.grouped::after {
    background: linear-gradient(90deg, #76b9ed 80%, #5c8db6 80%);
}

.selected {
    background: linear-gradient(90deg, #4b4b4b 92%, #3a3a3a 92%);
}

.selected::after {
    left: 0;
    right: 0;
    background: #76b9ed;
}

.sip {
    font-size: 9px;
    font-weight: bold;
    fill: #fff;
    text-anchor: middle;
}

.profile {
    position: absolute;
    right: 13px;
    bottom: 8px;
    width: 20px;
    height: 20px;
    border-radius: 10px;
    background: #33691e;
    font-size: 13px;
    text-align: center;
}

.tray {
    display: flex;
    align-items: center;
    margin-left: auto;
    gap: 10px;
}

.lang {
    margin-left: 2px;
    font-size: 15px;
}

.clock {
    width: 82px;
    font-size: 15px;
    line-height: 23px;
    text-align: center;
}

.notices {
    position: relative;
    margin: 0 16px 0 7px;
}

.badge {
    position: absolute;
    left: 9px;
    top: 9px;
    width: 22px;
    height: 22px;
    border: 1px solid #999;
    border-radius: 11px;
    background: #333;
    font-size: 12px;
    font-weight: bold;
    text-align: center;
}

.show-desktop {
    align-self: stretch;
    width: 6px;
    border-left: 1px solid #777;
}
```
